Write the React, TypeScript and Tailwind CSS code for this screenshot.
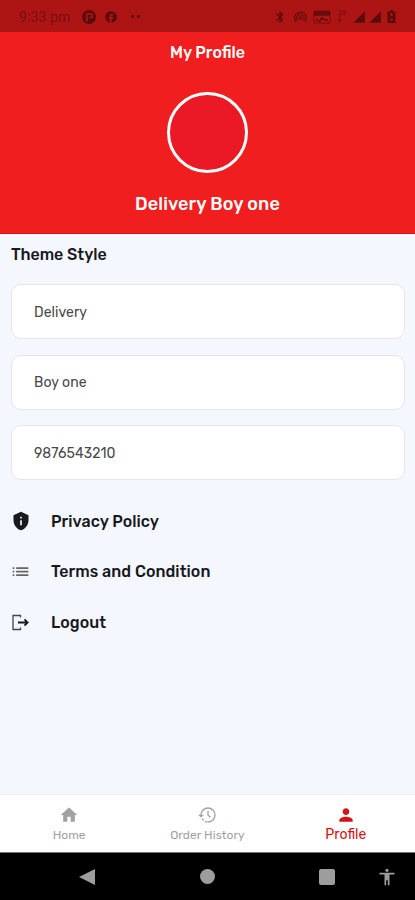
import type { ReactNode } from 'react';
import {
  MdAccessibility,
  MdBluetooth,
  MdFacebook,
  MdHome,
  MdList,
  MdPerson,
  MdPrivacyTip,
  MdSignalCellular4Bar,
} from 'react-icons/md';

function StatusBar() {
  return (
    <div className="flex h-8 items-center justify-between bg-[#ad1414] pl-[19px] pr-[19px] pt-px text-[#5c0b0b]">
      <div className="flex items-center">
        <span className="w-[63px] whitespace-nowrap pt-px font-['Roboto',sans-serif] text-[14px] tracking-[0.1px] text-[#7a1010]">
          9:33 pm
        </span>
        <svg className="size-[14px]" viewBox="0 0 14 14">
          <circle cx="7" cy="7" r="7" fill="currentColor" />
          <path d="M5 11.5V4h5v3.5H7.2" fill="none" stroke="#ad1414" strokeWidth="1.6" />
        </svg>
        <MdFacebook className="ml-[8px] size-[14px]" />
        <span className="ml-[13px] flex gap-[3px]">
          <i className="size-[3px] rounded-full bg-current" />
          <i className="size-[3px] rounded-full bg-current" />
        </span>
      </div>
      <div className="flex items-center">
        <MdBluetooth className="size-[14px]" />
        <svg className="ml-[6px] h-[14px] w-[15px] opacity-75" viewBox="0 0 15 14" fill="none" stroke="currentColor" strokeWidth="1.4">
          <path d="M3 12a6 6 0 1 1 9 0M5 10.5a3.5 3.5 0 1 1 5 0" />
          <circle cx="7.5" cy="8" r="1" fill="currentColor" />
        </svg>
        <svg className="ml-[5px] h-[14px] w-[18px]" viewBox="0 0 18 14" fill="none" stroke="currentColor">
          <path d="M1 1h16v12H1z" opacity=".6" />
          <path d="M1 3.5h16" strokeWidth="4" />
          <path d="M3 3.5h12" stroke="#ad1414" strokeDasharray="2 1" opacity=".5" />
          <path d="M3 10h2M6 12l3-4 3 2M12 10h3" strokeWidth="1.3" />
        </svg>
        <svg className="ml-[6px] h-[13px] w-[11px] opacity-50" viewBox="0 0 12 14" fill="none" stroke="currentColor" strokeWidth="1.3">
          <path d="M1 1h3v4H1M6 1h4M6 3h4M8 3v3M3 7v5M1 10l2 3 2-3" />
        </svg>
        <MdSignalCellular4Bar className="ml-[4px] size-[14px]" />
        <MdSignalCellular4Bar className="ml-[2px] size-[14px]" />
        <svg className="ml-[5px] h-[13px] w-[9px]" viewBox="0 0 9 13">
          <path d="M3 0h3v1.5h2.5V13h-8V1.5H3z" fill="currentColor" />
          <path d="M4.5 3v3M3 4.5h3M3 9.5h3" stroke="#ad1414" strokeWidth="1.3" />
        </svg>
      </div>
    </div>
  );
}

function Header() {
  return (
    <div className="flex h-[202px] flex-col items-center border-b border-[#d80f16] bg-[#f01e1e] text-white">
      <h1 className="mt-[11px] text-[16px] font-medium leading-5">My Profile</h1>
      <div className="mt-[29px] size-[81px] rounded-full border-[3px] border-white bg-[#ea1925]" />
      <p className="mt-[19px] text-[18px] font-medium leading-6 tracking-[0.1px]">Delivery Boy one</p>
    </div>
  );
}

function Field({ value }: { value: string }) {
  return (
    <div className="flex h-[55px] items-center rounded-[10px] border border-[#e4e6ea] bg-white pl-[22px] pt-px text-[14px] tracking-[0.05px] text-[#494949]">
      {value}
    </div>
  );
}

function MenuItem({ icon, label }: { icon: ReactNode; label: string }) {
  return (
    <button className="flex h-[50.5px] items-center text-left text-[#17191d]">
      <span className="flex w-10 items-center">{icon}</span>
      <span className="pt-px text-[16px] font-medium tracking-[0.06px]">{label}</span>
    </button>
  );
}

function LogoutIcon() {
  return (
    <svg className="ml-px size-[17px]" viewBox="0 0 17 17" fill="none" stroke="currentColor">
      <path d="M8.5 3.5v-2H1v14h7.5v-2" strokeWidth="1.3" opacity=".8" />
      <path d="M6 8.5h9.5M12.5 5.4l3.1 3.1-3.1 3.1" strokeWidth="1.8" />
    </svg>
  );
}

function HistoryIcon() {
  return (
    <svg className="size-[18px]" viewBox="0 0 18 18" fill="none" stroke="currentColor" strokeWidth="1.3">
      <path d="M3 9a7 7 0 1 1 7 7" />
      <path d="M9.5 16A7 7 0 0 1 3.8 12" strokeDasharray="2.5 1.5" />
      <path d="M0 8.7h6L3 11.6z" fill="currentColor" stroke="none" />
      <path d="M10 5v4.3l2.5 2" />
    </svg>
  );
}

function TabBar() {
  return (
    <nav className="grid h-[58px] grid-cols-3 border-t border-[#edf0f4] bg-white text-[#a1a1a1]">
      <button className="flex flex-col items-center pt-[10px]">
        <MdHome className="size-5" />
        <span className="text-[12px] leading-5">Home</span>
      </button>
      <button className="flex flex-col items-center pt-[11px]">
        <HistoryIcon />
        <span className="mt-px text-[12px] leading-5 tracking-[0.05px]">Order History</span>
      </button>
      <button className="flex flex-col items-center pt-[10px] text-[#d41414]">
        <MdPerson className="size-5" />
        <span className="text-[14px] leading-[19px]">Profile</span>
      </button>
    </nav>
  );
}

function SystemNav() {
  return (
    <div className="flex h-12 items-center border-t border-[#777] bg-black text-[#9d9d9d]">
      <svg className="ml-[79px] h-[18px] w-4" viewBox="0 0 16 18">
        <path d="M16 1v16L0 9z" fill="currentColor" />
      </svg>
      <span className="ml-[105px] size-[15px] rounded-full bg-current" />
      <span className="ml-[104px] size-4 rounded-[2px] bg-current" />
      <MdAccessibility className="ml-[42px] size-5" />
    </div>
  );
}

export default function App() {
  return (
    <div className="flex h-[900px] w-[415px] flex-col overflow-hidden bg-[#f4f7fe] font-['Rubik','Roboto',sans-serif]">
      <StatusBar />
      <Header />
      <main className="flex flex-1 flex-col pl-[11px] pr-[10px]">
        <h2 className="mt-[11px] text-[16px] font-medium leading-5 text-[#17191d]">Theme Style</h2>
        <div className="mt-[19px] flex flex-col gap-[15.5px]">
          <Field value="Delivery" />
          <Field value="Boy one" />
          <Field value="9876543210" />
        </div>
        <div className="mt-4 flex flex-col">
          <MenuItem icon={<MdPrivacyTip className="size-[20px]" />} label="Privacy Policy" />
          <MenuItem icon={<MdList className="-ml-px size-[21px] text-[#666]" />} label="Terms and Condition" />
          <MenuItem icon={<LogoutIcon />} label="Logout" />
        </div>
      </main>
      <TabBar />
      <SystemNav />
    </div>
  );
}
